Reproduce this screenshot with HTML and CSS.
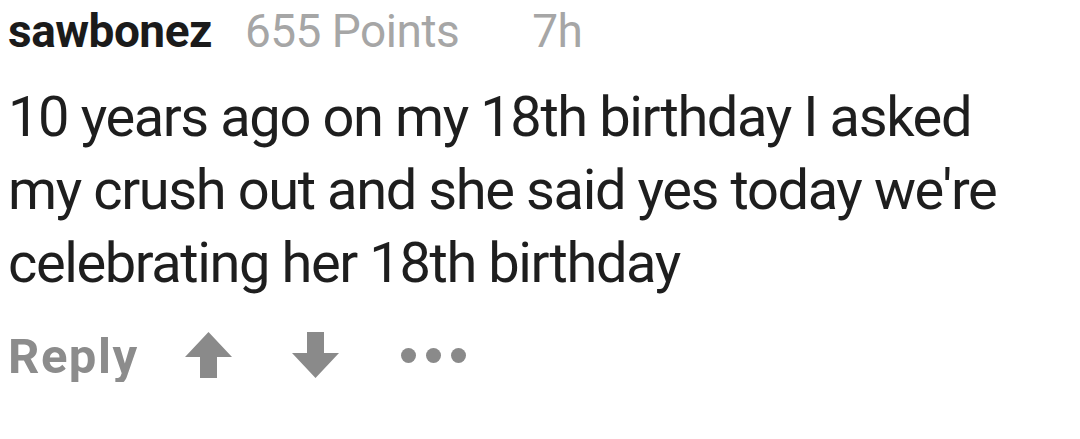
FILE: index.html
```html
<!DOCTYPE html>
<html lang="en">
<head>
    <meta charset="UTF-8">
    <title>Comment</title>
    <link rel="stylesheet" href="styles.css">
</head>
<body>
    <div class="comment">
        <div class="meta">
            <span class="author">sawbonez</span>
            <span class="points">655 Points</span>
            <span class="time">7h</span>
        </div>
        <p class="text">10 years ago on my 18th birthday I asked my crush out and she said yes today we're celebrating her 18th birthday</p>
        <div class="actions">
            <span class="reply">Reply</span>
            <svg class="vote up" width="47" height="46" viewBox="0 0 47 46">
                <path d="M23.5 0 L47 25 L32 25 L32 46 L15 46 L15 25 L0 25 Z" fill="#8a8a8a"/>
            </svg>
            <svg class="vote down" width="47" height="46" viewBox="0 0 47 46">
                <path d="M23.5 46 L47 21 L32 21 L32 0 L15 0 L15 21 L0 21 Z" fill="#8a8a8a"/>
            </svg>
            <svg class="more" width="65" height="15" viewBox="0 0 65 15">
                <circle cx="7.5" cy="7.5" r="7.5" fill="#8a8a8a"/>
                <circle cx="32.5" cy="7.5" r="7.5" fill="#8a8a8a"/>
                <circle cx="57.5" cy="7.5" r="7.5" fill="#8a8a8a"/>
            </svg>
        </div>
    </div>
</body>
</html>
```

FILE: styles.css
```css
body {
    margin: 0;
    background: #fff;
    font-family: Roboto, "Noto Sans", sans-serif;
}
.comment {
    padding: 4px 0 0 8px;
    width: 1010px;
}
.meta {
    display: flex;
    align-items: baseline;
    font-size: 46px;
    line-height: 54px;
    letter-spacing: -0.5px;
}
.author {
    font-weight: bold;
    color: #1b1b1b;
}
.points {
    color: #a6a6a6;
    margin-left: 33px;
}
.time {
    color: #a6a6a6;
    margin-left: 73px;
}
.text {
    margin: 23px 0 0;
    font-size: 56px;
    line-height: 73px;
    color: #1e1e1e;
    letter-spacing: -1.4px;
}
.actions {
    display: flex;
    align-items: flex-start;
    margin-top: 32px;
}
.reply {
    font-size: 49px;
    line-height: 50px;
    font-weight: bold;
    color: #8c8c8c;
    letter-spacing: 1.5px;
}
.up {
    margin-left: 46px;
}
.down {
    margin-left: 60px;
}
.more {
    margin-left: 62px;
    margin-top: 16px;
}
```
